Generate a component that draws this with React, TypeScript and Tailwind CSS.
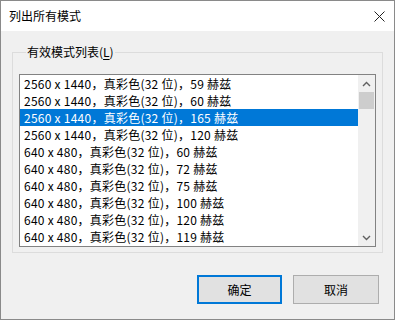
import React from "react";

const MODES = [
  "2560 x 1440，真彩色(32 位)，59 赫兹",
  "2560 x 1440，真彩色(32 位)，60 赫兹",
  "2560 x 1440，真彩色(32 位)，165 赫兹",
  "2560 x 1440，真彩色(32 位)，120 赫兹",
  "640 x 480，真彩色(32 位)，60 赫兹",
  "640 x 480，真彩色(32 位)，72 赫兹",
  "640 x 480，真彩色(32 位)，75 赫兹",
  "640 x 480，真彩色(32 位)，100 赫兹",
  "640 x 480，真彩色(32 位)，120 赫兹",
  "640 x 480，真彩色(32 位)，119 赫兹",
];

const SELECTED = 2;

function Chevron({ up }: { up?: boolean }) {
  return (
    <svg width="9" height="6" viewBox="0 0 9 6" aria-hidden>
      <path
        d={up ? "M1 5 L4.5 1.5 L8 5" : "M1 1 L4.5 4.5 L8 1"}
        stroke="#606060"
        strokeWidth="1.4"
        fill="none"
      />
    </svg>
  );
}

export default function App() {
  return (
    <div className="h-[329px] w-[396px] bg-white font-['Noto_Sans_CJK_SC',sans-serif] text-[12px] text-black">
      <div className="flex h-[320px] w-[395px] flex-col border border-[#8a8a8a] bg-[#f0f0f0]">
        {/* ---------------------------------------------------------- title */}
        <div className="flex h-[30px] items-center justify-between bg-white pl-[8px] pr-[9px]">
          <span className="leading-none">列出所有模式</span>
          <svg width="11" height="11" viewBox="0 0 11 11" aria-hidden>
            <path d="M0.5 0.5 L10.5 10.5 M10.5 0.5 L0.5 10.5" stroke="#222" strokeWidth="1" />
          </svg>
        </div>

        {/* ----------------------------------------------------------- body */}
        <div className="flex flex-1 flex-col px-[11px] pt-[13px]">
          <fieldset className="border border-[#dcdcdc] px-[6px] pt-[14px] pb-[5px]">
            <legend className="ml-[7px] px-[1px] leading-[16px]">
              有效模式列表(<span className="underline underline-offset-2">L</span>)
            </legend>
            <div className="flex h-[173px] border border-[#828282] bg-white">
              <div className="flex flex-1 flex-col tracking-[0.25px]">
                {MODES.map((m, i) => (
                  <div
                    key={i}
                    className={`flex h-[17px] items-center pl-[4px] leading-none ${
                      i === SELECTED ? "bg-[#0078d7] text-white" : ""
                    }`}
                  >
                    {m}
                  </div>
                ))}
              </div>
              <div className="flex w-[17px] flex-col bg-[#f0f0f0]">
                <div className="flex h-[17px] items-center justify-center">
                  <Chevron up />
                </div>
                <div className="mx-[1px] h-[17px] bg-[#cdcdcd]" />
                <div className="flex-1" />
                <div className="flex h-[17px] items-center justify-center">
                  <Chevron />
                </div>
              </div>
            </div>
          </fieldset>

          {/* ------------------------------------------------------ buttons */}
          <div className="mt-[22px] flex justify-end gap-[11px] pr-[4px]">
            <button className="h-[29px] w-[85px] border-2 border-[#0078d7] bg-[#e1e1e1]">确定</button>
            <button className="h-[29px] w-[86px] border border-[#adadad] bg-[#e1e1e1]">取消</button>
          </div>
        </div>
      </div>
    </div>
  );
}
